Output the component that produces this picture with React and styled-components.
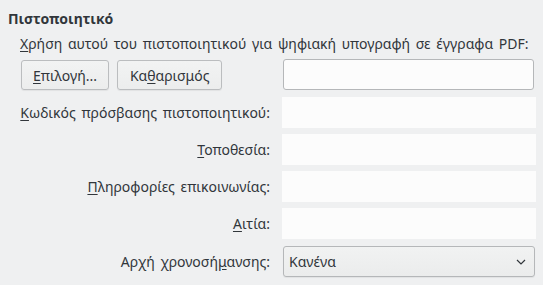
import React from "react";
import styled, { createGlobalStyle } from "styled-components";

const Global = createGlobalStyle`
  html, body {
    margin: 0;
    background: #eff0f1;
  }
  body {
    font-family: "Noto Sans", "Open Sans", sans-serif;
    font-size: 14px;
    color: #31363b;
  }
`;

const Page = styled.div`
  width: 543px;
  height: 285px;
  padding: 9px 8px 0 8px;
  box-sizing: border-box;
`;

const Title = styled.div`
  font-weight: bold;
  height: 19px;
  line-height: 19px;
`;

const Group = styled.div`
  padding-left: 12px;
`;

const Intro = styled.div`
  margin-top: 6px;
  height: 20px;
  line-height: 20px;
  word-spacing: 2px;
`;

const Form = styled.div`
  display: grid;
  grid-template-columns: 250px 254px;
  grid-template-rows: 32px 31px 31px 31px 31px 32px;
  column-gap: 12px;
  row-gap: 6px;
  margin-top: 5px;
`;

const Label = styled.div`
  display: flex;
  align-items: center;
  justify-content: flex-end;
  white-space: nowrap;
  word-spacing: 2px;
`;

const Buttons = styled.div`
  display: flex;
  gap: 8px;
  padding-left: 1px;
  align-items: flex-start;
  padding-top: 1px;
`;

const Button = styled.button`
  height: 30px;
  padding: 0 ${(p) => p.$pad}px;
  border: 1px solid #bbbdbf;
  border-radius: 3px;
  background: linear-gradient(#f2f3f3, #eceded);
  font: inherit;
  color: #31363b;
  box-shadow: 0 1px 1px rgba(0, 0, 0, 0.06);
`;

const Field = styled.div`
  box-sizing: border-box;
  height: 31px;
  margin: ${(p) => (p.$bordered ? "0 2px 0 1px" : "0")};
  background: #fcfcfc;
  border: ${(p) => (p.$bordered ? "1px solid #b5b7b9" : "none")};
  border-radius: ${(p) => (p.$bordered ? "3px" : "0")};
`;

const Select = styled.div`
  box-sizing: border-box;
  height: 31px;
  margin: 1px 1px 0 1px;
  display: flex;
  align-items: center;
  justify-content: space-between;
  padding: 0 8px 0 5px;
  border: 1px solid #b5b7b9;
  border-radius: 3px;
  background: linear-gradient(#f1f2f2, #ebecec);
  box-shadow: 0 1px 1px rgba(0, 0, 0, 0.06);
`;

const U = styled.span`
  text-decoration: underline;
  text-underline-offset: 2px;
`;

const Chevron = () => (
  <svg width="10" height="6" viewBox="0 0 10 6">
    <path d="M1 1 L5 5 L9 1" fill="none" stroke="#31363b" strokeWidth="1.2" />
  </svg>
);

export default function App() {
  return (
    <>
      <Global />
      <Page>
        <Title>Πιστοποιητικό</Title>
        <Group>
          <Intro>
            <U>Χ</U>ρήση αυτού του πιστοποιητικού για ψηφιακή υπογραφή σε έγγραφα PDF:
          </Intro>
          <Form>
            <Buttons>
              <Button $pad={11}>
                <U>Ε</U>πιλογή...
              </Button>
              <Button $pad={12}>
                Κα<U>θ</U>αρισμός
              </Button>
            </Buttons>
            <Field $bordered />
            <Label>
              <span>
                <U>Κ</U>ωδικός πρόσβασης πιστοποιητικού:
              </span>
            </Label>
            <Field />
            <Label>
              <span>
                <U>Τ</U>οποθεσία:
              </span>
            </Label>
            <Field />
            <Label>
              <span>
                <U>Π</U>ληροφορίες επικοινωνίας:
              </span>
            </Label>
            <Field />
            <Label>
              <span>
                <U>Α</U>ιτία:
              </span>
            </Label>
            <Field />
            <Label>
              <span>
                Αρχή χρονοσή<U>μ</U>ανσης:
              </span>
            </Label>
            <Select>
              <span>Κανένα</span>
              <Chevron />
            </Select>
          </Form>
        </Group>
      </Page>
    </>
  );
}
